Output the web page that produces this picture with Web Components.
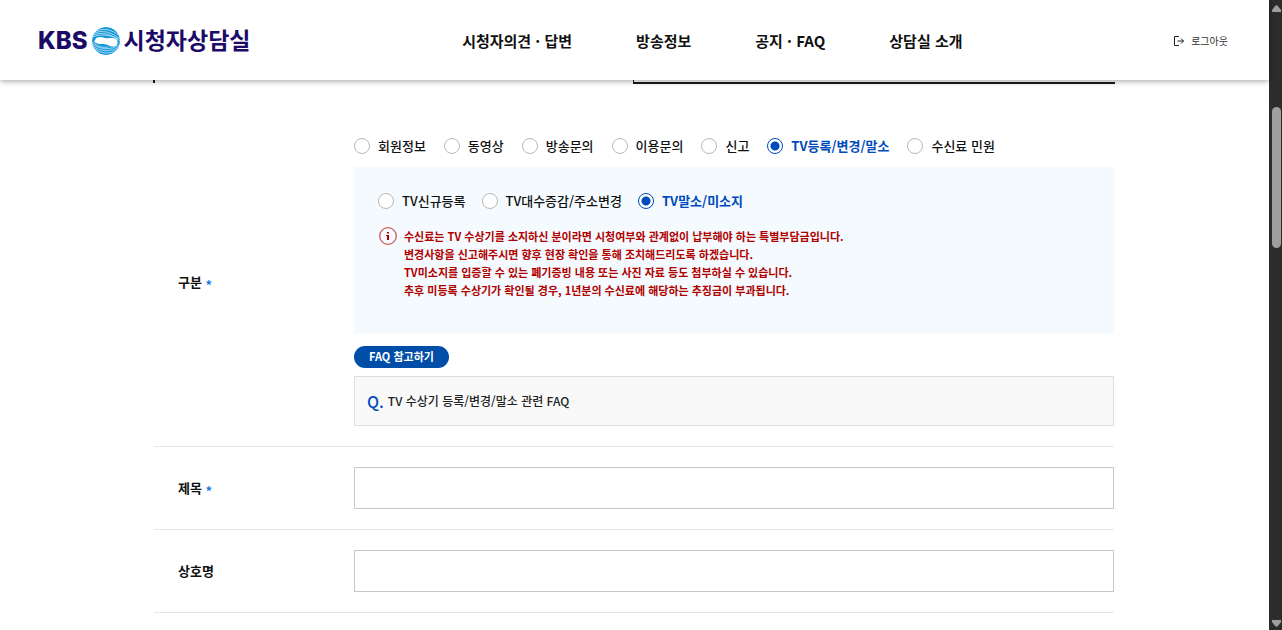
<!DOCTYPE html>
<html lang="ko">
<head>
<meta charset="utf-8">
<title>KBS 시청자상담실</title>
<style>
  body {
    margin: 0;
    background: #fff;
    color: #111;
    font: 500 13px/20px "Noto Sans CJK KR", "Noto Sans", sans-serif;
    --blue: #004bbc;
    --navy: #1b0a66;
    --red: #b00000;
  }
</style>
</head>
<body>
<app-shell>
  <site-header slot="header">
    <site-logo slot="logo"></site-logo>
    <nav-link href="#opinion">시청자의견 · 답변</nav-link>
    <nav-link href="#program">방송정보</nav-link>
    <nav-link href="#notice">공지 · FAQ</nav-link>
    <nav-link href="#about">상담실 소개</nav-link>
    <logout-link slot="tools">로그아웃</logout-link>
  </site-header>
  <step-tabs></step-tabs>
  <inquiry-form>
    <form-row label="구분" required>
      <radio-group name="category" legend="구분" selected="5"
        options="회원정보|동영상|방송문의|이용문의|신고|TV등록/변경/말소|수신료 민원"></radio-group>
      <option-panel>
        <radio-group name="tv" legend="TV등록/변경/말소" selected="2"
          options="TV신규등록|TV대수증감/주소변경|TV말소/미소지"></radio-group>
        <info-notice>
          수신료는 TV 수상기를 소지하신 분이라면 시청여부와 관계없이 납부해야 하는 특별부담금입니다.<br>
          변경사항을 신고해주시면 향후 현장 확인을 통해 조치해드리도록 하겠습니다.<br>
          TV미소지를 입증할 수 있는 폐기증빙 내용 또는 사진 자료 등도 첨부하실 수 있습니다.<br>
          추후 미등록 수상기가 확인될 경우, 1년분의 수신료에 해당하는 추징금이 부과됩니다.
        </info-notice>
      </option-panel>
      <faq-block heading="FAQ 참고하기">TV 수상기 등록/변경/말소 관련 FAQ</faq-block>
    </form-row>
    <form-row label="제목" required field="title"></form-row>
    <form-row label="상호명" field="company"></form-row>
  </inquiry-form>
  <scroll-rail slot="rail"></scroll-rail>
</app-shell>

<script>
const define = (name, render) => customElements.define(name, class extends HTMLElement {
  connectedCallback() {
    if (this.shadowRoot) return;
    this.attachShadow({ mode: 'open' }).innerHTML = render(this);
  }
});

define('app-shell', () => `
  <style>
    :host { display: grid; grid-template-columns: minmax(0, 1fr) 13px; min-height: 100vh; }
    main { padding-right: 1px; }
  </style>
  <div><slot name="header"></slot><main><slot></slot></main></div>
  <slot name="rail"></slot>`);

define('site-header', () => `
  <style>
    :host { display: block; position: sticky; top: 0; z-index: 1; }
    header {
      display: flex; align-items: center; justify-content: space-between;
      height: 80px; padding: 2px 41px 0 38px; box-sizing: border-box;
      background: #fff; box-shadow: 0 1px 6px rgba(0, 0, 0, .38);
    }
    nav { display: flex; gap: 64px; }
  </style>
  <header>
    <slot name="logo"></slot>
    <nav><slot></slot></nav>
    <slot name="tools"></slot>
  </header>`);

define('site-logo', () => `
  <style>
    :host { display: block; }
    a { display: flex; align-items: center; gap: 4px; height: 32px; color: var(--navy); text-decoration: none; }
    b { font: 800 24px/32px Inter, sans-serif; }
    strong { padding-bottom: 4px; font-size: 23px; line-height: 28px; font-weight: 700; }
    svg { display: block; }
  </style>
  <a href="#home">
    <b>KBS</b>
    <svg width="28" height="28" viewBox="1 0 28 28" aria-hidden="true">
      <defs><clipPath id="globe"><circle cx="15" cy="14" r="14"/></clipPath></defs>
      <g clip-path="url(#globe)">
        <circle cx="15" cy="14" r="14" fill="#1497da"/>
        <g fill="none" stroke="#bfe6f8" stroke-width=".8">
          <path d="M5 4Q17-1 29 9M3 6Q16 1 29 12M2 8Q16 3 29 14M1 10Q14 5 27 12"/>
          <path d="M1 17Q14 26 29 18M1 19Q14 28 29 20M2 21Q14 30 26 23M1 15Q10 22 17 20"/>
        </g>
        <path d="M4 13C6 9 10 10 14 11c4 1 7-1 11 1 2 1 2 4 1 6-2 2-6 2-9 0-4-2-8 0-12-2-2-1-2-2-1-3z" fill="#fff"/>
      </g>
    </svg>
    <strong>시청자상담실</strong>
  </a>`);

define('nav-link', el => `
  <style>
    :host { display: block; }
    a { color: #111; font-size: 15px; line-height: 24px; font-weight: 700; text-decoration: none; white-space: nowrap; }
  </style>
  <a href="${el.getAttribute('href')}"><slot></slot></a>`);

define('logout-link', () => `
  <style>
    :host { display: block; }
    a { display: flex; align-items: center; gap: 6px; color: #333; font-size: 10px; line-height: 16px; font-weight: 400; text-decoration: none; }
  </style>
  <a href="#logout">
    <svg width="11" height="10" viewBox="0 0 11 10" fill="none" stroke="#222" aria-hidden="true">
      <path d="M5 .5H.5v9H5M3.500 5H9.500M7 2.500L9.500 5 7 7.500"/>
    </svg>
    <slot></slot>
  </a>`);

define('step-tabs', () => `
  <style>
    :host { display: grid; grid-template-columns: 480fr 482fr; max-width: 962px; height: 4px; margin: 0 auto; }
    .idle { border-left: 2px solid #1a1a1a; height: 3px; }
    .current { border-left: 1px solid #1a1a1a; border-bottom: 2px solid #1a1a1a; }
  </style>
  <div class="idle"></div><div class="current"></div>`);

define('inquiry-form', () => `
  <style>
    :host { display: block; max-width: 960px; margin: 0 auto; padding-top: 34px; }
  </style>
  <form><slot></slot></form>`);

define('form-row', el => {
  const field = el.getAttribute('field');
  const star = el.hasAttribute('required') ? ' <i>*</i>' : '';
  const text = el.getAttribute('label') + star;
  return `
  <style>
    :host { display: grid; grid-template-columns: 200px minmax(0, 1fr); align-items: center; padding: 20px 0; border-bottom: 1px solid #e5e5e5; }
    .label { padding-left: 24px; font-weight: 700; }
    i { color: #1a78e6; font-style: normal; line-height: 0; vertical-align: -3px; }
    input {
      display: block; width: 100%; height: 42px; padding: 0 12px; box-sizing: border-box;
      border: 1px solid #c8c8c8; border-radius: 0; background: #fff; font: inherit; color: inherit;
    }
  </style>
  ${field
    ? `<label class="label" for="${field}">${text}</label><input type="text" id="${field}" name="${field}">`
    : `<div class="label">${text}</div><div><slot></slot></div>`}`;
});

define('radio-group', el => {
  const name = el.getAttribute('name');
  const selected = Number(el.getAttribute('selected'));
  return `
  <style>
    :host { display: block; }
    div { display: flex; flex-wrap: wrap; column-gap: var(--option-gap, 18px); }
    label { display: flex; align-items: center; gap: 8px; line-height: 16px; white-space: nowrap; }
    label:has(:checked) { color: var(--blue); font-weight: 700; }
    input {
      appearance: none; width: 16px; height: 16px; margin: 0; box-sizing: border-box;
      border: 1px solid #b8b8b8; border-radius: 50%; background: #fff;
    }
    input:checked { border-color: var(--blue); background: radial-gradient(circle, var(--blue) 4px, #fff 5px); }
  </style>
  <div role="radiogroup" aria-label="${el.getAttribute('legend')}">
    ${el.getAttribute('options').split('|').map((text, i) =>
      `<label><input type="radio" name="${name}"${i === selected ? ' checked' : ''}><span>${text}</span></label>`).join('')}
  </div>`;
});

define('option-panel', () => `
  <style>
    :host { --option-gap: 16px; display: grid; gap: 18px; margin-top: 13px; padding: 26px 24px 35px; background: #f4fafd; }
  </style>
  <slot></slot>`);

define('info-notice', () => `
  <style>
    :host { display: flex; gap: 7px; color: var(--red); font-size: 11px; line-height: 18px; font-weight: 700; }
    svg { flex: none; margin-left: 1px; }
    p { margin: 0; }
  </style>
  <svg width="18" height="18" viewBox="0 0 18 18" aria-hidden="true">
    <circle cx="9" cy="9" r="8.300" fill="none" stroke="#cc5a60" stroke-width="1.300"/>
    <path d="M8 5h2v1.500H8zM7 8h3v5H8V9H7z" fill="#b00000"/>
  </svg>
  <p><slot></slot></p>`);

define('faq-block', el => `
  <style>
    :host { display: block; margin-top: 12px; }
    button {
      display: block; height: 22px; padding: 0 15px 2px; border: 0; border-radius: 11px;
      background: #004ea8; color: #fff; font: inherit; font-size: 11px; line-height: 20px; font-weight: 700;
    }
    a {
      display: flex; align-items: center; gap: 4px; height: 50px; margin-top: 8px; padding: 0 12px; box-sizing: border-box;
      border: 1px solid #ddd; background: #f9f9f9; color: #222; font-size: 12px; text-decoration: none;
    }
    b { color: var(--blue); font-size: 16px; font-weight: 500; }
  </style>
  <button type="button">${el.getAttribute('heading')}</button>
  <a href="#faq"><b>Q.</b><span><slot></slot></span></a>`);

define('scroll-rail', () => `
  <style>
    :host {
      display: grid; grid-template-rows: 7px minmax(0, 1fr) 7px; justify-items: center;
      position: sticky; top: 0; height: 100vh; padding: 5px 0 3px 2px; box-sizing: border-box; background: #2c2c2c;
    }
    svg { display: block; }
    .track { display: grid; grid-template-rows: 95fr 141fr 372fr; }
    .thumb { grid-row: 2; width: 9px; border-radius: 5px; background: #9f9f9f; }
  </style>
  <svg width="9" height="7" viewBox="0 0 9 7"><path d="M3.500.5h2L9 5v2H0V5z" fill="#9f9f9f"/></svg>
  <div class="track"><div class="thumb"></div></div>
  <svg width="9" height="7" viewBox="0 0 9 7"><path d="M0 0h9v2L5.500 6.500h-2L0 2z" fill="#9f9f9f"/></svg>`);
</script>
</body>
</html>
